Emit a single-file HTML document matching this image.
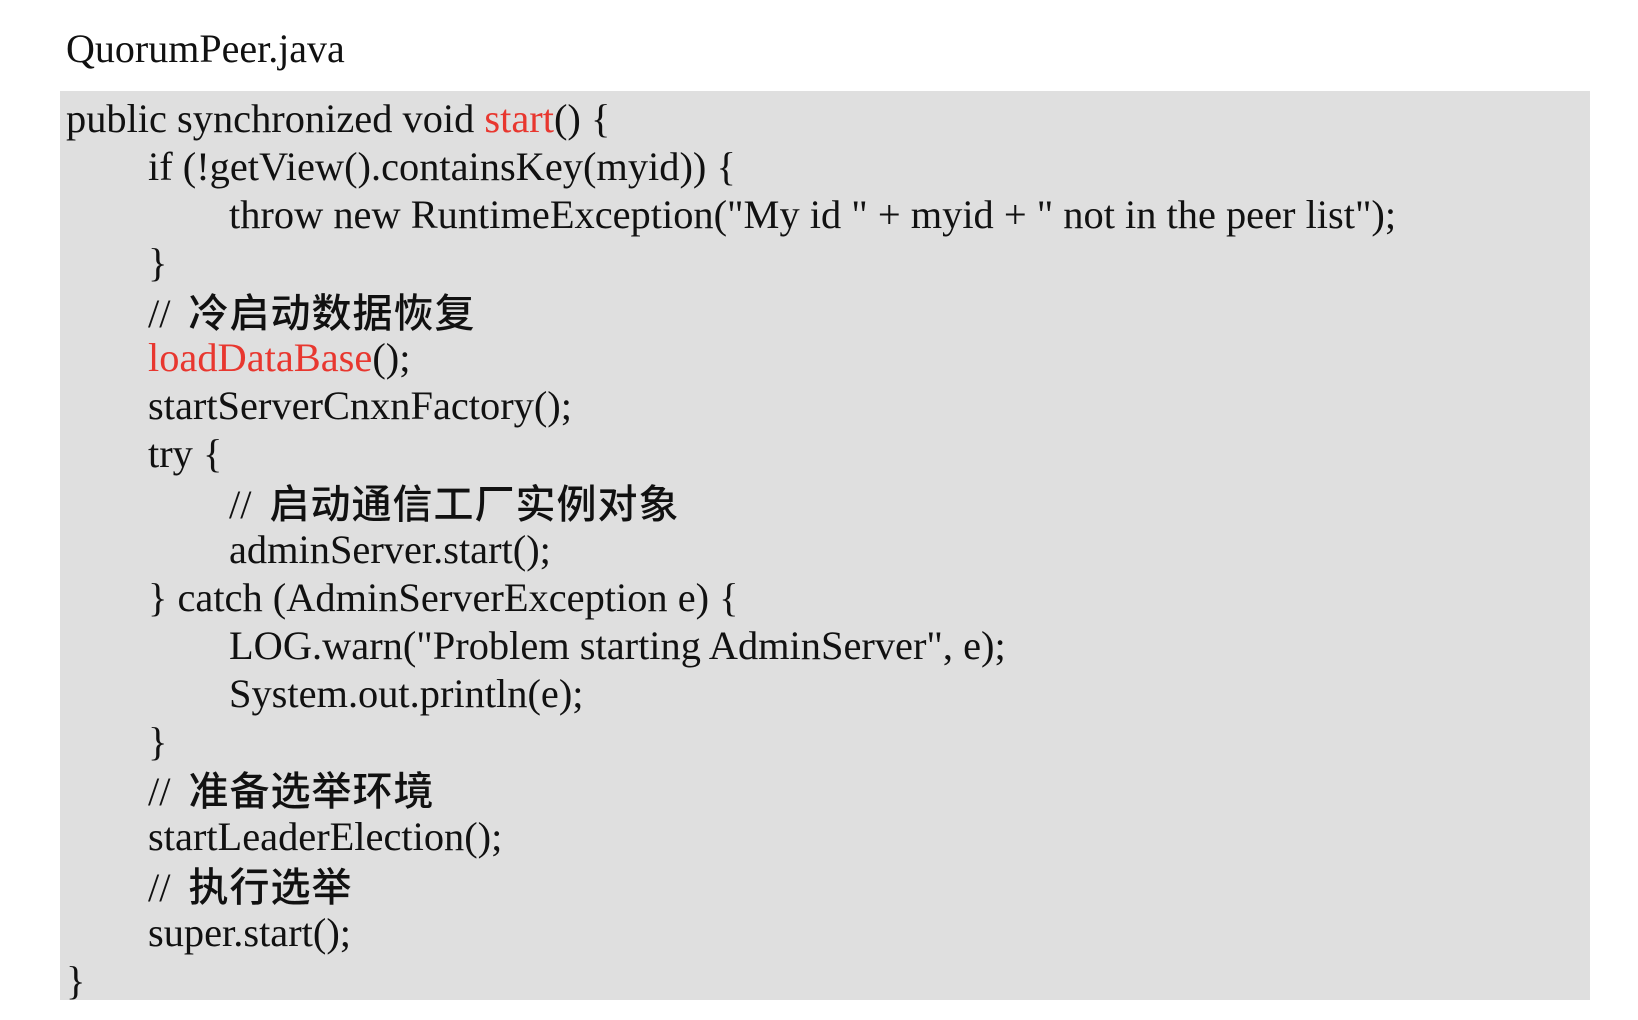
<!DOCTYPE html>
<html><head><meta charset="utf-8"><style>
html,body{margin:0;padding:0;background:#fff;width:1638px;height:1020px;overflow:hidden}
body{font-family:"Liberation Serif","Noto Serif CJK SC","Noto Sans CJK SC",serif;color:#111}
.title{position:absolute;left:66px;top:26px;font-size:40px;line-height:46px;white-space:pre}
.box{position:absolute;left:60px;top:91px;width:1530px;height:909px;background:#dfdfdf}
.code{position:absolute;left:66px;top:95px;font-size:40.4px;line-height:47.9px}
.l{height:47.9px;white-space:pre}
.i1{padding-left:82px}.i2{padding-left:163px}
.r{color:#e8372f}
.cj{font-family:"Noto Sans CJK SC",sans-serif;font-weight:500;font-size:40px;margin-left:8px;letter-spacing:1px}
</style></head><body>
<div class="title">QuorumPeer.java</div>
<div class="box"></div>
<div class="code"><div class="l">public synchronized void <span class="r">start</span>() {</div><div class="l i1">if (!getView().containsKey(myid)) {</div><div class="l i2">throw new RuntimeException("My id " + myid + " not in the peer list");</div><div class="l i1">}</div><div class="l i1">// <span class="cj">冷启动数据恢复</span></div><div class="l i1"><span class="r">loadDataBase</span>();</div><div class="l i1">startServerCnxnFactory();</div><div class="l i1">try {</div><div class="l i2">// <span class="cj">启动通信工厂实例对象</span></div><div class="l i2">adminServer.start();</div><div class="l i1">} catch (AdminServerException e) {</div><div class="l i2">LOG.warn("Problem starting AdminServer", e);</div><div class="l i2">System.out.println(e);</div><div class="l i1">}</div><div class="l i1">// <span class="cj">准备选举环境</span></div><div class="l i1">startLeaderElection();</div><div class="l i1">// <span class="cj">执行选举</span></div><div class="l i1">super.start();</div><div class="l">}</div></div>
</body></html>
